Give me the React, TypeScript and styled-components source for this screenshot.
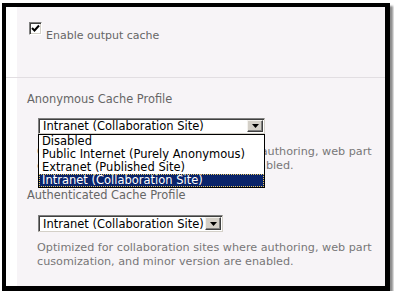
import React from "react";
import styled, { createGlobalStyle } from "styled-components";

const GlobalStyle = createGlobalStyle`
  html, body {
    margin: 0;
    padding: 0;
    background: #ffffff;
  }
  body {
    font-family: "DejaVu Sans", Verdana, sans-serif;
  }
`;

const Frame = styled.div`
  margin: 3px 0 0 2px;
  width: 379px;
  height: 279px;
  border-style: solid;
  border-color: #000;
  border-width: 4px 5px 5px 4px;
  box-shadow: 3px 3px 2px rgba(0, 0, 0, 0.45);
  background: linear-gradient(to right, #ffffff 11px, #f7f4f7 11px);
  display: flex;
  flex-direction: column;
`;

const CheckSection = styled.div`
  height: 71px;
  padding: 15px 0 0 23px;
  box-sizing: border-box;
  border-bottom: 1px solid #e2dee2;
`;

const CheckRow = styled.label`
  display: flex;
  align-items: flex-start;
  gap: 4px;
`;

const Box = styled.span`
  width: 13px;
  height: 13px;
  box-sizing: border-box;
  background: #fff;
  border: 1px solid;
  border-color: #808080 #ffffff #ffffff #808080;
  box-shadow: inset 1px 1px 0 #404040, inset -1px -1px 0 #d4d0c8;
  display: flex;
  align-items: center;
  justify-content: center;
`;

const CheckText = styled.span`
  margin-top: 7px;
  font-size: 11px;
  line-height: 13px;
  color: #666;
`;

const Body = styled.div`
  padding: 15px 0 0 21px;
  display: flex;
  flex-direction: column;
`;

const Field = styled.div<{ $gap: number }>`
  display: flex;
  flex-direction: column;
  margin-bottom: ${(p) => p.$gap}px;
`;

const Label = styled.div`
  font-size: 11.4px;
  line-height: 13px;
  color: #666;
`;

const SelectWrap = styled.div<{ $top: number }>`
  position: relative;
  margin: ${(p) => p.$top}px 0 0 11px;
  align-self: flex-start;
`;

const Select = styled.div<{ $w: number; $h: number }>`
  width: ${(p) => p.$w}px;
  height: ${(p) => p.$h}px;
  box-sizing: border-box;
  background: #fff;
  border: 1px solid;
  border-color: #808080 #d4d0c8 #d4d0c8 #808080;
  box-shadow: inset 1px 1px 0 #404040;
  display: flex;
  align-items: center;
  padding: 1px 1px 1px 4px;
  font-size: 11.5px;
  color: #000;
`;

const Value = styled.span`
  flex: 1;
  white-space: nowrap;
`;

const ArrowBtn = styled.span`
  width: 16px;
  align-self: stretch;
  box-sizing: border-box;
  background: #d4d0c8;
  border: 1px solid;
  border-color: #f4f2ee #404040 #404040 #f4f2ee;
  box-shadow: inset -1px -1px 0 #808080;
  display: flex;
  align-items: center;
  justify-content: center;
`;

const List = styled.div`
  position: absolute;
  left: 0;
  top: 100%;
  width: 227px;
  box-sizing: border-box;
  border: 1px solid #000;
  background: #fff;
  z-index: 2;
`;

const Option = styled.div<{ $on?: boolean }>`
  height: 13px;
  line-height: 13px;
  padding-left: 3px;
  font-size: 11.5px;
  white-space: nowrap;
  color: ${(p) => (p.$on ? "#fff" : "#000")};
  background: ${(p) => (p.$on ? "#0a246a" : "transparent")};
  outline: ${(p) => (p.$on ? "1px dotted #e8c860" : "none")};
  outline-offset: -1px;
`;

const Desc = styled.div<{ $top: number }>`
  margin: ${(p) => p.$top}px 0 0 10px;
  font-size: 11.2px;
  line-height: 14px;
  color: #777;
`;

const Arrow = () => (
  <svg width="7" height="4" viewBox="0 0 7 4">
    <path d="M0 0h7L3.5 4z" fill="#000" />
  </svg>
);

const options = [
  "Disabled",
  "Public Internet (Purely Anonymous)",
  "Extranet (Published Site)",
  "Intranet (Collaboration Site)",
];

const description = (
  <>
    Optimized for collaboration sites where authoring, web part
    <br />
    cusomization, and minor version are enabled.
  </>
);

export default function App() {
  return (
    <>
      <GlobalStyle />
      <Frame>
        <CheckSection>
          <CheckRow>
            <Box>
              <svg width="9" height="9" viewBox="0 0 9 9">
                <path d="M1 4l2.5 2.5L8 1.5" stroke="#000" strokeWidth="2" fill="none" />
              </svg>
            </Box>
            <CheckText>Enable output cache</CheckText>
          </CheckRow>
        </CheckSection>
        <Body>
          <Field $gap={16}>
            <Label>Anonymous Cache Profile</Label>
            <SelectWrap $top={12}>
              <Select $w={227} $h={16}>
                <Value>Intranet (Collaboration Site)</Value>
                <ArrowBtn>
                  <Arrow />
                </ArrowBtn>
              </Select>
              <List>
                {options.map((o, i) => (
                  <Option key={o} $on={i === 3}>
                    {o}
                  </Option>
                ))}
              </List>
            </SelectWrap>
            <Desc $top={11}>{description}</Desc>
          </Field>
          <Field $gap={0}>
            <Label>Authenticated Cache Profile</Label>
            <SelectWrap $top={13}>
              <Select $w={185} $h={17}>
                <Value>Intranet (Collaboration Site)</Value>
                <ArrowBtn>
                  <Arrow />
                </ArrowBtn>
              </Select>
            </SelectWrap>
            <Desc $top={9}>{description}</Desc>
          </Field>
        </Body>
      </Frame>
    </>
  );
}
